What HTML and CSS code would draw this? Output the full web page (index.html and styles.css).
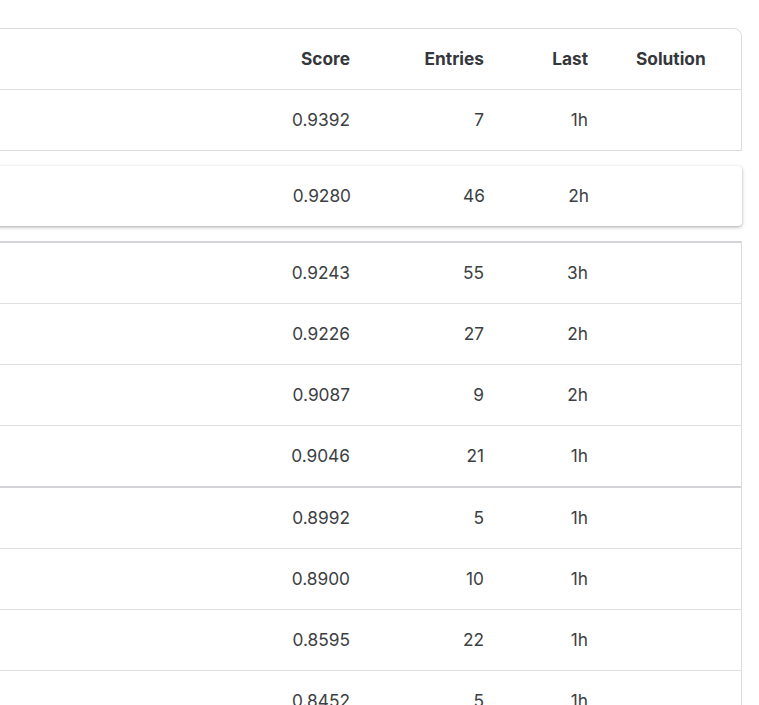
FILE: index.html
```html
<!DOCTYPE html>
<html>
<head>
<meta charset="utf-8">
<link rel="stylesheet" href="styles.css">
</head>
<body>
<div class="board">
  <div class="card top-card">
    <div class="row head">
      <div class="cell name"></div>
      <div class="cell num">Score</div>
      <div class="cell num">Entries</div>
      <div class="cell num">Last</div>
      <div class="cell sol">Solution</div>
    </div>
    <div class="row">
      <div class="cell name"></div>
      <div class="cell num">0.9392</div>
      <div class="cell num">7</div>
      <div class="cell num">1h</div>
      <div class="cell sol"></div>
    </div>
  </div>

  <div class="card me-card">
    <div class="row">
      <div class="cell name"></div>
      <div class="cell num">0.9280</div>
      <div class="cell num">46</div>
      <div class="cell num">2h</div>
      <div class="cell sol"></div>
    </div>
  </div>

  <div class="card list-card">
    <div class="row"><div class="cell name"></div><div class="cell num">0.9243</div><div class="cell num">55</div><div class="cell num">3h</div><div class="cell sol"></div></div>
    <div class="row"><div class="cell name"></div><div class="cell num">0.9226</div><div class="cell num">27</div><div class="cell num">2h</div><div class="cell sol"></div></div>
    <div class="row"><div class="cell name"></div><div class="cell num">0.9087</div><div class="cell num">9</div><div class="cell num">2h</div><div class="cell sol"></div></div>
    <div class="row tier-end"><div class="cell name"></div><div class="cell num">0.9046</div><div class="cell num">21</div><div class="cell num">1h</div><div class="cell sol"></div></div>
    <div class="row"><div class="cell name"></div><div class="cell num">0.8992</div><div class="cell num">5</div><div class="cell num">1h</div><div class="cell sol"></div></div>
    <div class="row"><div class="cell name"></div><div class="cell num">0.8900</div><div class="cell num">10</div><div class="cell num">1h</div><div class="cell sol"></div></div>
    <div class="row"><div class="cell name"></div><div class="cell num">0.8595</div><div class="cell num">22</div><div class="cell num">1h</div><div class="cell sol"></div></div>
    <div class="row"><div class="cell name"></div><div class="cell num">0.8452</div><div class="cell num">5</div><div class="cell num">1h</div><div class="cell sol"></div></div>
  </div>
</div>
</body>
</html>
```

FILE: styles.css
```css
html, body {
  margin: 0;
  padding: 0;
  background: #ffffff;
  overflow: hidden;
}
body {
  font-family: Inter, "Noto Sans", sans-serif;
  font-size: 17.3px;
  color: #3c4043;
  padding-top: 28px;
}
.board {
  margin-left: -360px;
  margin-right: 17px;
  display: flex;
  flex-direction: column;
}
.card {
  background: #fff;
  border: 1px solid #dadce0;
}
.top-card {
  border-radius: 0 8px 0 0;
}
.me-card {
  margin-top: 15px;
  border: none;
  border-radius: 4px;
  box-shadow: 0 1px 3px rgba(0, 0, 0, 0.28), 0 2px 6px rgba(0, 0, 0, 0.08);
}
.list-card {
  margin-top: 15px;
  border-top: 2px solid #d4d4d8;
  border-bottom: none;
}
.row {
  display: grid;
  grid-template-columns: 1fr 100px 134px 104px 153px;
  height: 58px;
  padding-bottom: 2px;
  align-items: center;
  border-bottom: 1px solid #e0e0e0;
}
.row:last-child {
  border-bottom: none;
}
.top-card .row:last-child,
.me-card .row {
  border-bottom: none;
}
.row.tier-end {
  border-bottom: 2px solid #d4d4d8;
}
.head .cell {
  font-weight: 700;
  color: #35373b;
}
.cell.num {
  text-align: right;
}
.cell.sol {
  padding-left: 48px;
}
```
